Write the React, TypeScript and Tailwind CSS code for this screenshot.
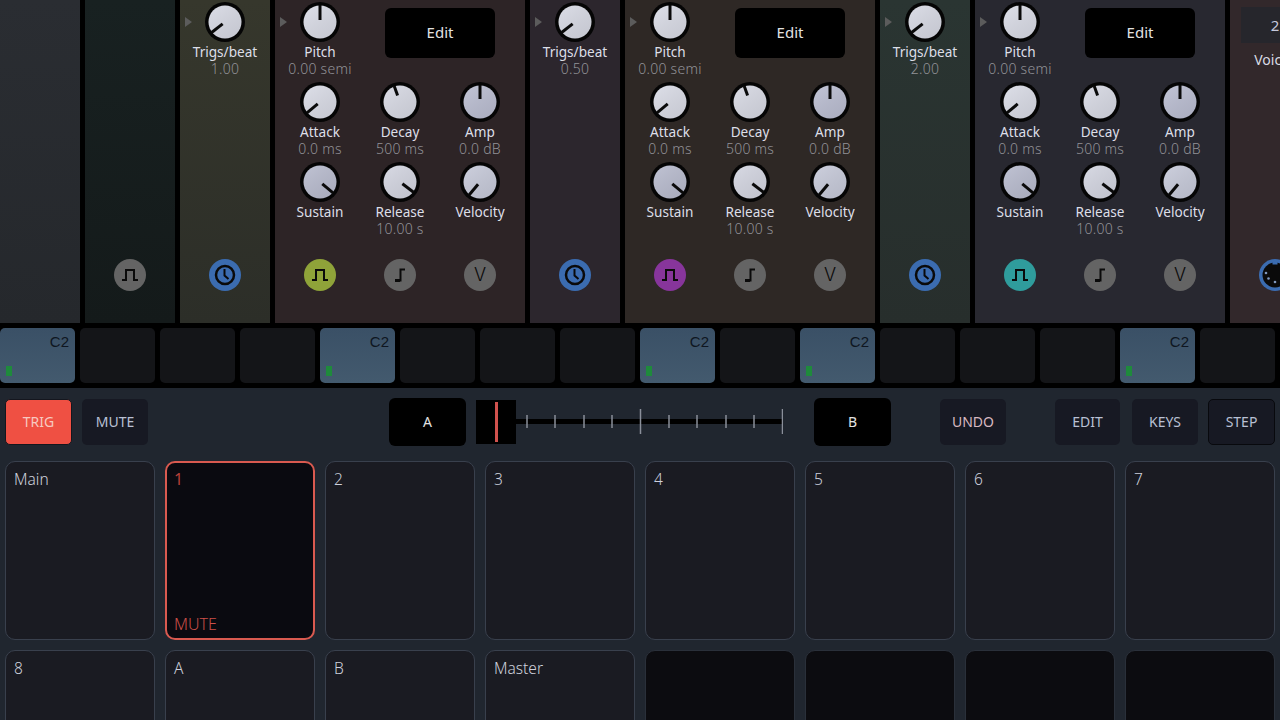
import { ReactNode, useId } from 'react';

const font = { fontFamily: '"Noto Sans", "Noto Sans CJK KR", sans-serif' };

type KnobProps = { angle: number; label: string; value?: string; fill: string; from?: number };

function Knob({ angle, fill, from = 3 }: { angle: number; fill: string; from?: number }) {
  const id = useId();
  return (
    <svg width="40" height="40" viewBox="0 0 40 40" className="block shrink-0">
      <defs>
        <linearGradient id={id} x1="0.2" y1="0.1" x2="0.8" y2="0.9">
          <stop offset="0" stopColor="#fff" stopOpacity="0.08" />
          <stop offset="1" stopColor="#000" stopOpacity="0.06" />
        </linearGradient>
      </defs>
      <circle cx="20" cy="20" r="20" fill="#050505" />
      <circle cx="20" cy="20" r="16.5" fill={fill} />
      <circle cx="20" cy="20" r="16.5" fill={`url(#${id})`} />
      <line x1="20" y1={20 - from} x2="20" y2="3" stroke="#0a0a0a" strokeWidth="3" transform={`rotate(${angle} 20 20)`} />
    </svg>
  );
}

function KnobCell({ angle, label, value, fill, from }: KnobProps) {
  return (
    <div className="flex h-[80px] w-[80px] flex-col items-center">
      <Knob angle={angle} fill={fill} from={from} />
      <div className="h-[18px] whitespace-nowrap text-[13.6px] leading-[20px] text-[#dddfe8]">{label}</div>
      {value && <div className="h-[18px] whitespace-nowrap text-[14px] font-light leading-[18px] tracking-[0.25px] text-[#929297]">{value}</div>}
    </div>
  );
}

function Arrow() {
  return <div className="absolute left-[5px] top-[17px] h-0 w-0 border-y-[5px] border-l-[7px] border-y-transparent border-l-[#5c5c5c]" />;
}

function Round({ color, children }: { color: string; children: ReactNode }) {
  return (
    <div className={`flex h-[32px] w-[32px] shrink-0 items-center justify-center rounded-full ${color}`}>{children}</div>
  );
}

function PulseIcon() {
  return (
    <svg width="20" height="14" viewBox="0 0 20 14" fill="none" stroke="#0a0a0a" strokeWidth="2">
      <path d="M2 12h4V2h8v10h4" />
    </svg>
  );
}

function NoteIcon() {
  return (
    <svg width="14" height="16" viewBox="0 0 14 16" fill="none" stroke="#0a0a0a" strokeWidth="2">
      <path d="M2 13.5h5.5V2.5H12" />
      <path d="M2 13.5h5" strokeWidth="3" />
    </svg>
  );
}

function ClockIcon() {
  return (
    <svg width="24" height="24" viewBox="0 0 24 24" fill="none" stroke="#0a0a0a" strokeWidth="2.5">
      <circle cx="12" cy="12" r="9" />
      <path d="M11.5 6v6.5l4 3.5" strokeWidth="2" />
    </svg>
  );
}

function MidiIcon() {
  return (
    <svg width="26" height="26" viewBox="0 0 26 26">
      <circle cx="13" cy="13" r="12.5" fill="#0a0a0a" />
      <rect x="10.5" y="0" width="5" height="2.5" fill="#3b6cb0" />
      <g fill="#7f97bd">
        <circle cx="4" cy="11" r="1.3" />
        <circle cx="6.5" cy="16.5" r="1.3" />
        <circle cx="13" cy="20" r="1.3" />
        <circle cx="19.5" cy="16.5" r="1.3" />
        <circle cx="22" cy="11" r="1.3" />
      </g>
    </svg>
  );
}

function GateRow({ pulse }: { pulse: string }) {
  return (
    <div className="mt-auto flex pb-[32px] pl-[5px]">
      <div className="flex w-[80px] justify-center"><Round color={pulse}><PulseIcon /></Round></div>
      <div className="flex w-[80px] justify-center"><Round color="bg-[#646464]"><NoteIcon /></Round></div>
      <div className="flex w-[80px] justify-center">
        <Round color="bg-[#646464]">
          <span className="text-[18px] leading-none text-[#0a0a0a]" style={{ fontFamily: 'Inter, sans-serif', fontWeight: 300 }}>V</span>
        </Round>
      </div>
    </div>
  );
}

function SynthPanel({ bg, pulse }: { bg: string; pulse: string }) {
  return (
    <div className={`relative flex h-full w-[250px] shrink-0 flex-col pt-[2px] ${bg}`}>
      <Arrow />
      <div className="grid grid-cols-[80px_80px_80px] pl-[5px]">
        <KnobCell angle={0} label="Pitch" value="0.00 semi" fill="#d6d8e2" from={2} />
        <div className="col-span-2 flex justify-center pt-[6px]">
          <button className="h-[50px] w-[110px] rounded-[6px] bg-black pb-[1px] text-[15px] text-[#e2e2e2]">Edit</button>
        </div>
        <KnobCell angle={-130} label="Attack" value="0.0 ms" fill="#d6d8e2" />
        <KnobCell angle={-20} label="Decay" value="500 ms" fill="#d4d6e0" from={7} />
        <KnobCell angle={0} label="Amp" value="0.0 dB" fill="#b8bbce" />
        <KnobCell angle={130} label="Sustain" fill="#b6b9cb" />
        <KnobCell angle={127} label="Release" value="10.00 s" fill="#d0d2dd" />
        <KnobCell angle={-140} label="Velocity" fill="#c4c7d6" />
      </div>
      <GateRow pulse={pulse} />
    </div>
  );
}

function ClockPanel({ bg, value, angle }: { bg: string; value: string; angle: number }) {
  return (
    <div className={`relative flex h-full w-[90px] shrink-0 flex-col items-center pt-[2px] ${bg}`}>
      <Arrow />
      <KnobCell angle={angle} label="Trigs/beat" value={value} fill="#d4d6e0" />
      <div className="mt-auto pb-[32px]"><Round color="bg-[#3b6cb0]"><ClockIcon /></Round></div>
    </div>
  );
}

function Rack() {
  return (
    <div className="flex h-[323px] gap-[5px] bg-black">
      <div className="h-full w-[80px] shrink-0 bg-gradient-to-b from-[#2a2d32] to-[#25282c]" />
      <div className="flex h-full w-[90px] shrink-0 flex-col items-center bg-gradient-to-b from-[#182121] to-[#141a1a]">
        <div className="mt-auto pb-[32px]"><Round color="bg-[#646464]"><PulseIcon /></Round></div>
      </div>
      <ClockPanel bg="bg-gradient-to-b from-[#36372c] to-[#2c2e28]" value="1.00" angle={-128} />
      <SynthPanel bg="bg-[#2d2426]" pulse="bg-[#8fa339]" />
      <ClockPanel bg="bg-[#2c262d]" value="0.50" angle={-128} />
      <SynthPanel bg="bg-[#2e2825]" pulse="bg-[#87359b]" />
      <ClockPanel bg="bg-gradient-to-b from-[#2a3532] to-[#272e2c]" value="2.00" angle={-128} />
      <SynthPanel bg="bg-[#282830]" pulse="bg-[#2f9c9c]" />
      <div className="flex h-full w-[90px] shrink-0 flex-col items-center bg-[#32282b] pt-[7px]">
        <div className="flex h-[36px] w-[68px] items-center justify-center bg-[#26262c] text-[15px] text-[#c6c9dc]">2</div>
        <div className="mt-[8px] text-[14px] leading-[18px] text-[#d9dbe4]">Voices</div>
        <div className="mt-auto pb-[32px]"><Round color="bg-[#3b6cb0]"><MidiIcon /></Round></div>
      </div>
    </div>
  );
}

const activeSteps = [0, 4, 8, 10, 14];

function Steps() {
  return (
    <div className="flex h-[65px] gap-[5px] bg-black pt-[5px]">
      {Array.from({ length: 16 }, (_, i) =>
        activeSteps.includes(i) ? (
          <div key={i} className="relative h-[55px] w-[75px] shrink-0 rounded-[5px] bg-gradient-to-b from-[#3a5066] to-[#435a6e]">
            <span className="absolute right-[6px] top-[4px] text-[15px] leading-[20px] text-[#0f1620]" style={{ fontFamily: '"Liberation Sans", sans-serif' }}>C2</span>
            <span className="absolute bottom-[7px] left-[6px] h-[10px] w-[6px] bg-[#1f8a3c]" />
          </div>
        ) : (
          <div key={i} className="h-[55px] w-[75px] shrink-0 rounded-[5px] bg-[#141518]" />
        ),
      )}
    </div>
  );
}

function ToolButton({ label, className = '' }: { label: string; className?: string }) {
  return (
    <button className={`mt-[11px] flex h-[46px] w-[66px] shrink-0 items-center justify-center rounded-[5px] bg-[#171923] pb-[2px] text-[14px] text-[#b9c0d4] ${className}`}>
      {label}
    </button>
  );
}

const smallTicks = [11, 39, 68, 96, 153, 181, 210, 238];
const bigTicks = [125, 267];

function Fader() {
  return (
    <div className="ml-[10px] mt-[12px] flex h-[44px] shrink-0">
      <div className="flex h-[44px] w-[40px] justify-center bg-black py-[2px]">
        <div className="h-full w-[3px] bg-[#d0524e]" />
      </div>
      <svg width="267" height="44" viewBox="0 0 267 44" className="block">
        <rect x="0" y="19" width="267" height="5" fill="#000" />
        {smallTicks.map((x) => (
          <line key={x} x1={x} x2={x} y1="15" y2="28" stroke="#8a8f9a" strokeWidth="1.5" />
        ))}
        {bigTicks.map((x) => (
          <line key={x} x1={x - 0.5} x2={x - 0.5} y1="9" y2="34" stroke="#8a8f9a" strokeWidth="1.5" />
        ))}
      </svg>
    </div>
  );
}

function Toolbar() {
  return (
    <div className="flex h-[73px] pl-[5px]">
      <ToolButton label="TRIG" className="!w-[67px] border border-[#14161e] !bg-[#ef5043] !text-[#f7c9c0]" />
      <ToolButton label="MUTE" className="ml-[10px]" />
      <button className="ml-[241px] mt-[10px] h-[48px] w-[77px] shrink-0 rounded-[6px] bg-black pb-[2px] text-[14px] text-[#e2e2e2]">A</button>
      <Fader />
      <button className="ml-[31px] mt-[10px] h-[48px] w-[77px] shrink-0 rounded-[6px] bg-black pb-[2px] text-[14px] text-[#e2e2e2]">B</button>
      <ToolButton label="UNDO" className="ml-[49px] !text-[#d8b8c0]" />
      <ToolButton label="EDIT" className="ml-[49px] !w-[65px]" />
      <ToolButton label="KEYS" className="ml-[12px]" />
      <ToolButton label="STEP" className="ml-[10px] !w-[67px] border border-[#08090d]" />
    </div>
  );
}

const pads = ['Main', '1', '2', '3', '4', '5', '6', '7', '8', 'A', 'B', 'Master', '', '', '', ''];

function Pad({ label }: { label: string }) {
  if (label === '1') {
    return (
      <div className="flex h-[179px] w-[150px] flex-col justify-between rounded-[10px] border-2 border-[#d95a50] bg-[#0a0a10] px-[7px] pb-[2px] pt-[4px] text-[16px] leading-[24px] text-[#b8403a]">
        <span>1</span>
        <span className="font-light text-[#cc4f48]">MUTE</span>
      </div>
    );
  }
  if (!label) return <div className="h-[179px] w-[150px] rounded-[10px] border border-[#2a303a] bg-[#0c0c10]" />;
  return (
    <div className="h-[179px] w-[150px] rounded-[10px] border border-[#39404d] bg-[#1a1b22] px-[8px] pt-[5px] text-[15.5px] font-light leading-[24px] text-[#cdd0dc]">
      {label}
    </div>
  );
}

export default function App() {
  return (
    <div className="h-[720px] w-[1280px] overflow-hidden bg-[#20262f]" style={font}>
      <Rack />
      <Steps />
      <Toolbar />
      <div className="flex flex-wrap gap-[10px] pl-[5px]">
        {pads.map((p, i) => (
          <Pad key={i} label={p} />
        ))}
      </div>
    </div>
  );
}
